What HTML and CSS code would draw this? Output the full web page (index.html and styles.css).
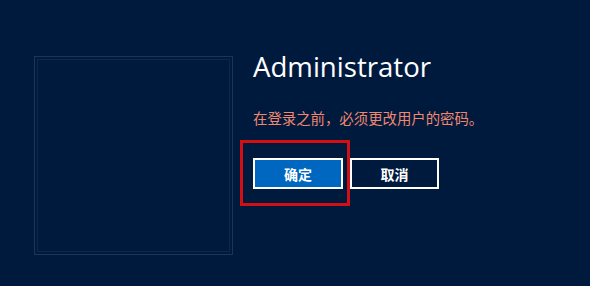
FILE: index.html
```html
<!DOCTYPE html>
<html lang="zh-CN">
<head>
<meta charset="utf-8">
<link rel="stylesheet" href="styles.css">
</head>
<body>
<div class="screen">
  <div class="avatar"></div>
  <div class="panel">
    <h1 class="user">Administrator</h1>
    <p class="msg">在登录之前，必须更改用户的密码。</p>
    <div class="actions">
      <div class="focus">
        <button class="btn primary">确定</button>
      </div>
      <button class="btn">取消</button>
    </div>
  </div>
</div>
</body>
</html>
```
FILE: styles.css
```css
html, body {
  margin: 0;
  padding: 0;
  background: #001a3e;
}
body {
  width: 590px;
  height: 286px;
  overflow: hidden;
  font-family: "Open Sans", "Noto Sans CJK SC", sans-serif;
}
.screen {
  display: flex;
  align-items: flex-start;
  padding: 56px 0 0 34px;
}
.avatar {
  width: 197px;
  height: 197px;
  border: 1px solid #1d3459;
  box-shadow: inset 0 0 0 2px #001a3e, inset 0 0 0 3px #0e274d;
  flex: none;
}
.panel {
  margin-left: 7px;
  display: flex;
  flex-direction: column;
}
.user {
  margin: -8px 0 0 13px;
  font-weight: 400;
  font-size: 27.6px;
  line-height: 36px;
  color: #ffffff;
}
.msg {
  margin: 24px 0 0 13px;
  font-family: "Noto Sans CJK SC", sans-serif;
  font-size: 14.4px;
  line-height: 20px;
  color: #f0876e;
}
.actions {
  display: flex;
  align-items: flex-start;
  margin-top: 12px;
}
.focus {
  border: 3px solid #d40f14;
  padding: 15px 3px 15px 10px;
  width: 91px;
  height: 30px;
}
.btn {
  display: block;
  box-sizing: border-box;
  width: 89px;
  height: 31px;
  padding: 0;
  border: 2px solid #ffffff;
  background: transparent;
  color: #ffffff;
  font-family: "Noto Sans CJK SC", sans-serif;
  font-weight: 700;
  font-size: 14px;
  margin-top: 18px;
}
.focus .btn {
  margin-top: 0;
  width: 90px;
}
.primary {
  background: #0067c0;
}
```
